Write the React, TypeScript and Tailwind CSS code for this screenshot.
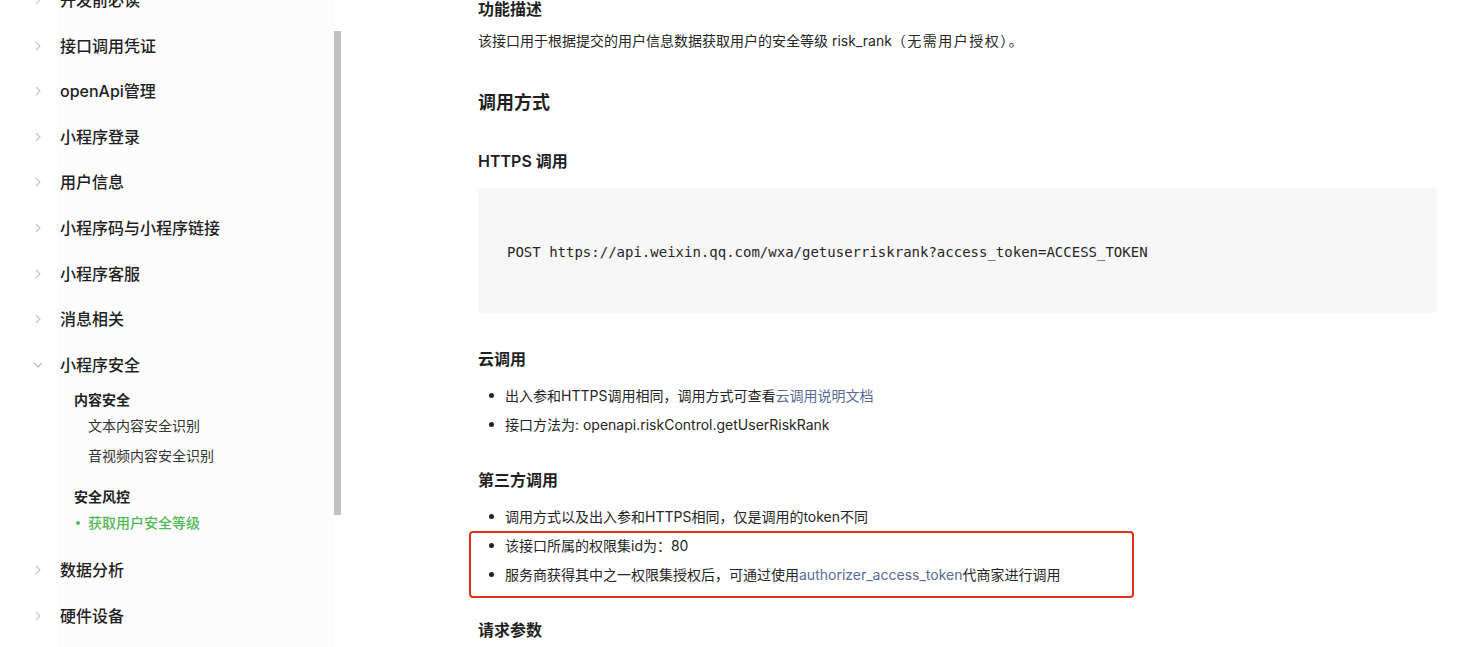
import React from "react";

const FONT = { fontFamily: '"Inter", "Noto Sans CJK SC", sans-serif' };

const navTop = ["开发前必读", "接口调用凭证", "openApi管理", "小程序登录", "用户信息", "小程序码与小程序链接", "小程序客服", "消息相关"];
const navBottom = ["数据分析", "硬件设备"];

function Chevron({ open = false }: { open?: boolean }) {
  return (
    <svg width="10" height="10" viewBox="0 0 10 10" className="shrink-0">
      {open ? (
        <path d="M1 3l4 4 4-4" fill="none" stroke="#b5b5b5" strokeWidth="1.1" />
      ) : (
        <path d="M3 1l4 4-4 4" fill="none" stroke="#c4c4c4" strokeWidth="1.1" />
      )}
    </svg>
  );
}

function NavRow({ label, open = false }: { label: string; open?: boolean }) {
  return (
    <div className="h-[45.6px] flex items-center">
      <div className="w-[60px] flex justify-end pr-[17px]">
        <Chevron open={open} />
      </div>
      <span className="text-[16px] font-medium text-[#1f1f1f]">{label}</span>
    </div>
  );
}

function Bullet({ children }: { children: React.ReactNode }) {
  return (
    <li className="h-[29px] flex items-center text-[14px] text-[#262626]">
      <span className="w-[5px] h-[5px] rounded-full bg-[#222] ml-[11px] mr-[11px] shrink-0" />
      <span>{children}</span>
    </li>
  );
}

function H3({ children, className = "" }: { children: React.ReactNode; className?: string }) {
  return <h3 className={`h-[22px] flex items-center text-[16px] font-semibold text-[#1f1f1f] ${className}`}>{children}</h3>;
}

export default function App() {
  return (
    <div className="w-[1484px] h-[647px] overflow-hidden bg-white flex" style={FONT}>
      {/* Sidebar */}
      <aside className="w-[341px] shrink-0 flex">
        <nav className="w-[334px] shrink-0 bg-[linear-gradient(to_right,#ffffff_57px,#fcfcfc_57px)]">
          <div className="-mt-[22.8px]">
            {navTop.map((l) => (
              <NavRow key={l} label={l} />
            ))}
            <NavRow label="小程序安全" open />
            <div className="h-[159.6px]">
              <div className="h-[23px] flex items-center pl-[74px] text-[14px] font-semibold text-[#1f1f1f]">内容安全</div>
              <div className="h-[30px] flex items-center pl-[88px] text-[14px] text-[#333]">文本内容安全识别</div>
              <div className="h-[30px] flex items-center pl-[88px] text-[14px] text-[#333]">音视频内容安全识别</div>
              <div className="mt-[14px] h-[24px] flex items-center pl-[74px] text-[14px] font-semibold text-[#1f1f1f]">安全风控</div>
              <div className="h-[28px] flex items-center pl-[76px] text-[14px] text-[#53b958] font-medium">
                <span className="w-[4px] h-[4px] rounded-full bg-[#53b958] mr-[8px]" />
                获取用户安全等级
              </div>
            </div>
            {navBottom.map((l) => (
              <NavRow key={l} label={l} />
            ))}
          </div>
        </nav>
        <div className="w-[7px] shrink-0">
          <div className="mt-[31px] h-[484px] bg-[#c1c1c1]" />
        </div>
      </aside>

      {/* Main content */}
      <main className="flex-1 pl-[137px] pr-[47px]">
        <H3 className="-mt-[2px]">功能描述</H3>
        <p className="mt-[9px] h-[22px] flex items-center text-[14px] text-[#262626]">
          该接口用于根据提交的用户信息数据获取用户的安全等级 risk_rank<span className="tracking-[1.5px]">（无需用户授权）。</span>
        </p>

        <h2 className="mt-[38px] h-[26px] flex items-center text-[18px] font-semibold text-[#1f1f1f]">调用方式</h2>

        <H3 className="mt-[35px]">HTTPS 调用</H3>
        <pre
          className="mt-[16px] h-[125px] rounded-[4px] bg-[#f7f7f7] pl-[29px] pt-[4px] flex items-center text-[14px] text-[#262626]"
          style={{ fontFamily: '"DejaVu Sans Mono", monospace' }}
        >
          POST https://api.weixin.qq.com/wxa/getuserriskrank?access_token=ACCESS_TOKEN
        </pre>

        <H3 className="mt-[35px]">云调用</H3>
        <ul className="mt-[10.5px]">
          <Bullet>
            出入参和HTTPS调用相同，调用方式可查看<span className="text-[#576b95]">云调用说明文档</span>
          </Bullet>
          <Bullet>接口方法为: openapi.riskControl.getUserRiskRank</Bullet>
        </ul>

        <H3 className="mt-[30.5px]">第三方调用</H3>
        <ul className="mt-[10.5px]">
          <Bullet>调用方式以及出入参和HTTPS相同，仅是调用的token不同</Bullet>
          <div className="relative">
            <Bullet>该接口所属的权限集id为：80</Bullet>
            <Bullet>
              服务商获得其中之一权限集授权后，可通过使用<span className="text-[#576b95]">authorizer_access_token</span>代商家进行调用
            </Bullet>
            <div className="absolute left-[-9px] top-[0.5px] w-[665px] h-[67px] border-2 border-[#e3321f] rounded-[4px] pointer-events-none" />
          </div>
        </ul>

        <H3 className="mt-[30.5px]">请求参数</H3>
      </main>
    </div>
  );
}
